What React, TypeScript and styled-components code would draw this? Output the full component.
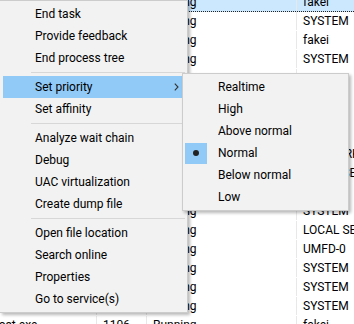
import React from "react";
import styled, { createGlobalStyle } from "styled-components";

const GlobalStyle = createGlobalStyle`
  html, body { margin: 0; padding: 0; background: #ffffff; }
  body { overflow: hidden; }
`;

const FONT = `"Segoe UI", Roboto, "Noto Sans", sans-serif`;

const Page = styled.div`
  position: relative;
  width: 354px;
  height: 324px;
  overflow: hidden;
  background: #ffffff;
  font-family: ${FONT};
  font-size: 12px;
  color: #000;
`;

const Table = styled.div`
  margin-top: -7px;
  margin-left: -23px;
  display: flex;
  flex-direction: column;
`;

const Row = styled.div<{ $selected?: boolean }>`
  display: grid;
  grid-template-columns: 120px 50px 150px 120px;
  height: 19px;
  box-sizing: border-box;
  background: ${(p) => (p.$selected ? "#cce8ff" : "transparent")};
  border-bottom: 1px ${(p) => (p.$selected ? "dotted #222" : "solid transparent")};
`;

const Cell = styled.div<{ $last?: boolean }>`
  display: flex;
  align-items: center;
  padding-left: 6px;
  white-space: nowrap;
  overflow: hidden;
  border-right: 1px solid ${(p) => (p.$last ? "transparent" : "#e8e8e8")};
`;

const Menu = styled.div`
  position: absolute;
  left: 0;
  top: 0;
  width: 182px;
  padding: 2px 2px 2px 3px;
  background: #f2f2f2;
  border: 1px solid #cccccc;
  border-left: none;
  box-shadow: 2px 2px 3px rgba(0, 0, 0, 0.28);
  display: flex;
  flex-direction: column;
`;

const SubMenu = styled.div`
  position: absolute;
  left: 182px;
  top: 73px;
  width: 161px;
  padding: 2px;
  background: #f2f2f2;
  border: 1px solid #cccccc;
  box-shadow: 2px 2px 3px rgba(0, 0, 0, 0.28);
  display: flex;
  flex-direction: column;
`;

const Item = styled.div<{ $active?: boolean }>`
  position: relative;
  height: 22px;
  display: flex;
  align-items: center;
  padding-left: 32px;
  background: ${(p) => (p.$active ? "#91c9f7" : "transparent")};
  white-space: nowrap;
`;

const SubItem = styled.div`
  height: 22px;
  display: flex;
  align-items: center;
  white-space: nowrap;
`;

const Check = styled.div<{ $on?: boolean }>`
  width: 22px;
  height: 21px;
  margin-right: 11px;
  display: flex;
  align-items: center;
  justify-content: center;
  background: ${(p) => (p.$on ? "#91c9f7" : "transparent")};
`;

const Dot = styled.div`
  width: 6px;
  height: 6px;
  border-radius: 50%;
  background: #222;
`;

const Separator = styled.div`
  height: 7px;
  display: flex;
  align-items: center;
  padding-left: 28px;
  &::after {
    content: "";
    flex: 1;
    height: 1px;
    background: #d7d7d7;
  }
`;

const Chevron = styled.svg`
  position: absolute;
  right: 6px;
  top: 7px;
`;

type R = { name: string; pid: string; user: string; sel?: boolean };

const rows: R[] = [
  { name: "explorer.exe", pid: "4820", user: "fakei", sel: true },
  { name: "fontdrvhost.exe", pid: "900", user: "SYSTEM" },
  { name: "RuntimeBroker.exe", pid: "5512", user: "fakei" },
  { name: "lsass.exe", pid: "736", user: "SYSTEM" },
  { name: "services.exe", pid: "716", user: "SYSTEM" },
  { name: "smss.exe", pid: "340", user: "SYSTEM" },
  { name: "spoolsv.exe", pid: "2104", user: "SYSTEM" },
  { name: "svchost.exe", pid: "856", user: "SYSTEM" },
  { name: "svchost.exe", pid: "964", user: "NETWORK SERVICE" },
  { name: "svchost.exe", pid: "1012", user: "LOCAL SERVICE" },
  { name: "svchost.exe", pid: "1040", user: "SYSTEM" },
  { name: "svchost.exe", pid: "1064", user: "SYSTEM" },
  { name: "svchost.exe", pid: "1076", user: "LOCAL SERVICE" },
  { name: "fontdrvhost.exe", pid: "908", user: "UMFD-0" },
  { name: "svchost.exe", pid: "1084", user: "SYSTEM" },
  { name: "svchost.exe", pid: "1092", user: "SYSTEM" },
  { name: "svchost.exe", pid: "1100", user: "SYSTEM" },
  { name: "sihost.exe", pid: "1106", user: "fakei" },
];

const mainItems: (string | null)[] = [
  "End task",
  "Provide feedback",
  "End process tree",
  null,
  "Set priority",
  "Set affinity",
  null,
  "Analyze wait chain",
  "Debug",
  "UAC virtualization",
  "Create dump file",
  null,
  "Open file location",
  "Search online",
  "Properties",
  "Go to service(s)",
];

const priorities = ["Realtime", "High", "Above normal", "Normal", "Below normal", "Low"];

export default function App() {
  return (
    <>
      <GlobalStyle />
      <Page>
        <Table>
          {rows.map((r, i) => (
            <Row key={i} $selected={r.sel}>
              <Cell>{r.name}</Cell>
              <Cell>{r.pid}</Cell>
              <Cell>Running</Cell>
              <Cell $last>{r.user}</Cell>
            </Row>
          ))}
        </Table>
        <Menu>
          {mainItems.map((t, i) =>
            t === null ? (
              <Separator key={i} />
            ) : (
              <Item key={i} $active={t === "Set priority"}>
                {t}
                {t === "Set priority" && (
                  <Chevron width="5" height="8" viewBox="0 0 5 8">
                    <path d="M0.8 0.6 L4 4 L0.8 7.4" fill="none" stroke="#333" strokeWidth="1.1" />
                  </Chevron>
                )}
              </Item>
            )
          )}
        </Menu>
        <SubMenu>
          {priorities.map((p) => (
            <SubItem key={p}>
              <Check $on={p === "Normal"}>{p === "Normal" && <Dot />}</Check>
              {p}
            </SubItem>
          ))}
        </SubMenu>
      </Page>
    </>
  );
}
